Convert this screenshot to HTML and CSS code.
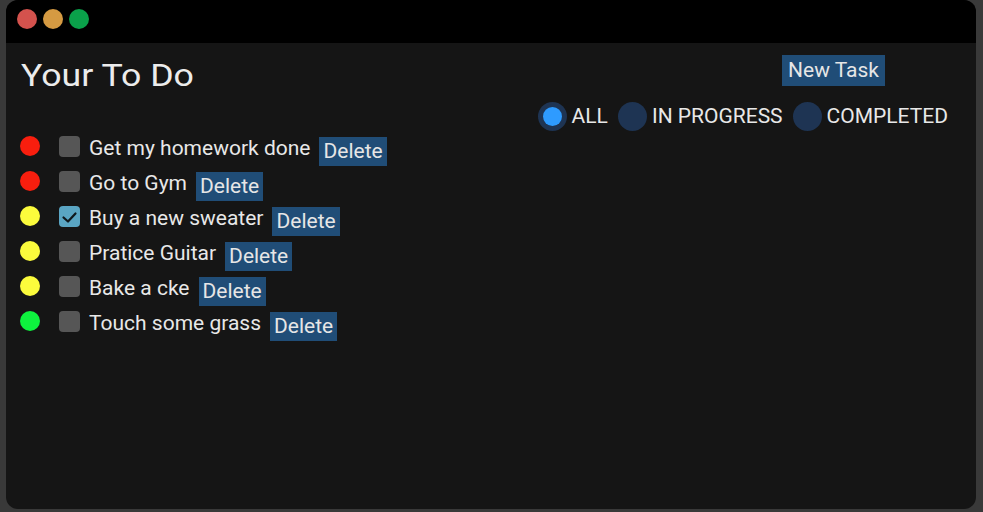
FILE: index.html
```html
<!DOCTYPE html>
<html>
<head>
<meta charset="utf-8">
<link rel="stylesheet" href="styles.css">
</head>
<body>
<div class="window">
  <div class="titlebar">
    <span class="light red"></span>
    <span class="light orange"></span>
    <span class="light green"></span>
  </div>
  <div class="content">
    <div class="header">
      <h1 class="title">Your To Do</h1>
      <div class="controls">
        <button class="btn new-task">New Task</button>
        <div class="filters">
          <label class="radio selected"><span class="ring"><span class="dot-in"></span></span><span class="rlabel">ALL</span></label>
          <label class="radio"><span class="ring"></span><span class="rlabel">IN PROGRESS</span></label>
          <label class="radio"><span class="ring"></span><span class="rlabel">COMPLETED</span></label>
        </div>
      </div>
    </div>
    <ul class="list">
      <li class="item"><span class="prio high"></span><span class="check"></span><span class="text">Get my homework done</span><button class="btn del">Delete</button></li>
      <li class="item"><span class="prio high"></span><span class="check"></span><span class="text">Go to Gym</span><button class="btn del">Delete</button></li>
      <li class="item"><span class="prio mid"></span><span class="check checked"><svg viewBox="0 0 21 21" width="21" height="21"><polyline points="4.5,11.5 9,15.5 16.5,7.5" fill="none" stroke="#10181c" stroke-width="2.2" stroke-linecap="round" stroke-linejoin="round"/></svg></span><span class="text">Buy a new sweater</span><button class="btn del">Delete</button></li>
      <li class="item"><span class="prio mid"></span><span class="check"></span><span class="text">Pratice Guitar</span><button class="btn del">Delete</button></li>
      <li class="item"><span class="prio mid"></span><span class="check"></span><span class="text">Bake a cke</span><button class="btn del">Delete</button></li>
      <li class="item"><span class="prio low"></span><span class="check"></span><span class="text">Touch some grass</span><button class="btn del">Delete</button></li>
    </ul>
  </div>
</div>
</body>
</html>
```
FILE: styles.css
```css
html, body {
  margin: 0;
  padding: 0;
  background: #393939;
  font-family: Roboto, "Noto Sans", sans-serif;
  color: #e8e8e8;
}
.window {
  margin-left: 6px;
  width: 970px;
  height: 509px;
  background: #151515;
  border-radius: 12px;
  overflow: hidden;
}
.titlebar {
  height: 43px;
  background: #000;
  display: flex;
  align-items: flex-start;
  padding: 9px 0 0 11px;
  box-sizing: border-box;
  gap: 6px;
}
.light {
  width: 20px;
  height: 20px;
  border-radius: 50%;
}
.light.red { background: #d4524d; }
.light.orange { background: #d59a42; }
.light.green { background: #0aa14a; }
.content {
  padding: 12px 28px 0 14px;
}
.header {
  display: flex;
  justify-content: space-between;
  align-items: flex-start;
}
.title {
  margin: 2px 0 0 1px;
  font-size: 31px;
  line-height: 37px;
  font-weight: 400;
  color: #ececec;
  transform: scaleX(1.15);
  transform-origin: left center;
}
.controls {
  display: flex;
  flex-direction: column;
  align-items: flex-end;
}
.btn {
  border: 0;
  background: #204d77;
  color: #e6e6e6;
  font-family: Roboto, "Noto Sans", sans-serif;
  font-size: 21px;
  padding: 0 4px;
  margin: 0;
}
.new-task {
  height: 31px;
  line-height: 29px;
  padding: 1px 6px 1px;
  margin-right: 63px;
}
.filters {
  display: flex;
  margin-top: 16px;
  gap: 10px;
  height: 29px;
}
.radio {
  display: flex;
  align-items: center;
  gap: 5px;
  font-size: 21px;
  line-height: 29px;
}
.ring {
  width: 29px;
  height: 29px;
  border-radius: 50%;
  background: #1e3453;
  display: flex;
  align-items: center;
  justify-content: center;
}
.dot-in {
  width: 19px;
  height: 19px;
  border-radius: 50%;
  background: #2e9bff;
}
.list {
  list-style: none;
  margin: 5px 0 0 0;
  padding: 0;
}
.item {
  display: flex;
  align-items: flex-start;
  height: 35px;
}
.prio {
  width: 20px;
  height: 20px;
  border-radius: 50%;
}
.prio.high { background: #f81e0e; }
.prio.mid { background: #fbfb3c; }
.prio.low { background: #0ef33e; }
.check {
  width: 21px;
  height: 21px;
  border-radius: 4px;
  background: #565656;
  margin-left: 19px;
  display: flex;
}
.check.checked { background: #5aa5c3; }
.text {
  margin-left: 9px;
  font-size: 21px;
  line-height: 24px;
  color: #e8e8e8;
}
.del {
  margin-left: 9px;
  margin-top: 1px;
  height: 29px;
  line-height: 29px;
}
```
